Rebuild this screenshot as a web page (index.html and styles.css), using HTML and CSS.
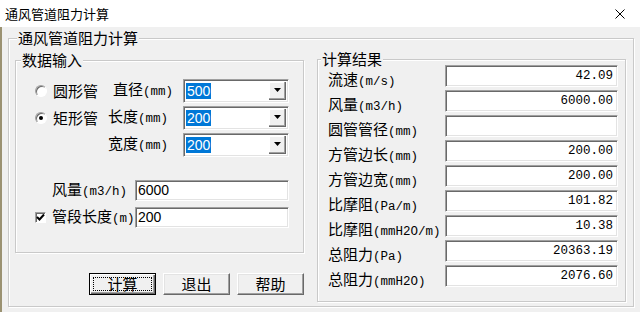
FILE: index.html
```html
<!DOCTYPE html>
<html lang="zh-CN">
<head>
    <meta charset="UTF-8">
    <title>通风管道阻力计算</title>
    <link rel="stylesheet" href="styles.css">
</head>
<body>
    <div class="titlebar">
        <span>通风管道阻力计算</span>
        <svg class="close" width="10" height="10" viewBox="0 0 10 10">
            <path d="M0.5 0.5 L9.5 9.5 M9.5 0.5 L0.5 9.5" stroke="#000" stroke-width="1" fill="none"/>
        </svg>
    </div>

    <div class="client">
        <div class="group outer">
            <div class="group-title">通风管道阻力计算</div>
            <div class="columns">
                <!-- Input side -->
                <div class="left-col">
                    <div class="group input-group">
                        <div class="group-title">数据输入</div>

                        <div class="row">
                            <span class="radio"></span>
                            <span class="name">圆形管</span>
                            <span class="unit-label first">直径<span class="u">(mm)</span></span>
                            <div class="combo">
                                <span class="sel">500</span>
                                <span class="drop"><svg width="7" height="4" viewBox="0 0 7 4"><path d="M0 0 H7 L3.5 4 Z" fill="#000"/></svg></span>
                            </div>
                        </div>

                        <div class="row">
                            <span class="radio checked"></span>
                            <span class="name">矩形管</span>
                            <span class="unit-label">长度<span class="u">(mm)</span></span>
                            <div class="combo">
                                <span class="sel">200</span>
                                <span class="drop"><svg width="7" height="4" viewBox="0 0 7 4"><path d="M0 0 H7 L3.5 4 Z" fill="#000"/></svg></span>
                            </div>
                        </div>

                        <div class="row">
                            <span class="spacer"></span>
                            <span class="unit-label">宽度<span class="u">(mm)</span></span>
                            <div class="combo">
                                <span class="sel">200</span>
                                <span class="drop"><svg width="7" height="4" viewBox="0 0 7 4"><path d="M0 0 H7 L3.5 4 Z" fill="#000"/></svg></span>
                            </div>
                        </div>

                        <div class="row field-row">
                            <span class="check-space"></span>
                            <span class="field-label">风量<span class="u">(m3/h)</span></span>
                            <div class="field">6000</div>
                        </div>

                        <div class="row">
                            <span class="checkbox"><svg width="9" height="9" viewBox="0 0 9 9"><path d="M1 4 L3.5 6.5 L8 1.5" stroke="#000" stroke-width="2" fill="none"/></svg></span>
                            <span class="field-label">管段长度<span class="u">(m)</span></span>
                            <div class="field">200</div>
                        </div>
                    </div>

                    <div class="buttons">
                        <div class="btn default"><span class="focus">计算</span></div>
                        <div class="btn">退出</div>
                        <div class="btn">帮助</div>
                    </div>
                </div>

                <!-- Results side -->
                <div class="group result-group">
                    <div class="group-title">计算结果</div>
                    <div class="result-row"><span class="label">流速<span class="u">(m/s)</span></span><div class="out">42.09</div></div>
                    <div class="result-row"><span class="label">风量<span class="u">(m3/h)</span></span><div class="out">6000.00</div></div>
                    <div class="result-row"><span class="label">圆管管径<span class="u">(mm)</span></span><div class="out"></div></div>
                    <div class="result-row"><span class="label">方管边长<span class="u">(mm)</span></span><div class="out">200.00</div></div>
                    <div class="result-row"><span class="label">方管边宽<span class="u">(mm)</span></span><div class="out">200.00</div></div>
                    <div class="result-row"><span class="label">比摩阻<span class="u">(Pa/m)</span></span><div class="out">101.82</div></div>
                    <div class="result-row"><span class="label">比摩阻<span class="u">(mmH2O/m)</span></span><div class="out">10.38</div></div>
                    <div class="result-row"><span class="label">总阻力<span class="u">(Pa)</span></span><div class="out">20363.19</div></div>
                    <div class="result-row"><span class="label">总阻力<span class="u">(mmH2O)</span></span><div class="out">2076.60</div></div>
                </div>
            </div>
        </div>
    </div>
</body>
</html>
```

FILE: styles.css
```css
/* Base */
* {
    box-sizing: border-box;
}

body {
    margin: 0;
    width: 640px;
    height: 312px;
    overflow: hidden;
    background: #f0f0f0;
    font-family: "Noto Sans CJK SC", sans-serif;
    font-size: 15px;
    color: #000;
}

/* Title bar */
.titlebar {
    height: 27px;
    background: #fff;
    display: flex;
    align-items: center;
    justify-content: space-between;
    padding: 0 15px 0 5px;
    font-size: 13px;
}

.client {
    height: 285px;
    border-left: 2px solid #9b9272;
    padding: 11px 0 0 6px;
}

/* Group boxes */
.group {
    border: 1px solid #c9c9c9;
    box-shadow: inset 1px 1px 0 #fff, 1px 1px 0 #fff;
}

.group-title {
    width: fit-content;
    margin-top: -9px;
    padding: 0 1px;
    line-height: 16px;
    background: #f0f0f0;
    white-space: nowrap;
}

.outer {
    width: 626px;
    height: 269px;
}

.outer > .group-title {
    margin-left: 8px;
}

.columns {
    display: flex;
    align-items: flex-start;
    gap: 13px;
    margin: 14px 0 0 6px;
}

.left-col {
    width: 289px;
}

/* Input group */
.input-group {
    height: 193px;
    padding-right: 14px;
}

.input-group > .group-title {
    margin-left: 5px;
    margin-bottom: 9px;
}

.row {
    display: flex;
    align-items: center;
    height: 27px;
    padding-left: 19px;
    line-height: 16px;
    white-space: nowrap;
}

.field-row {
    margin-top: 19px;
}

.u {
    font-family: "Liberation Mono", monospace;
    font-size: 12.5px;
}

.radio {
    position: relative;
    flex-shrink: 0;
    width: 12px;
    height: 12px;
    border-radius: 50%;
    background: #fff;
    border: 1px solid;
    border-color: #a0a0a0 #fff #fff #a0a0a0;
    box-shadow: inset 1px 1px 0 #696969;
}

.radio.checked::after {
    content: "";
    position: absolute;
    left: 3px;
    top: 3px;
    width: 4px;
    height: 4px;
    border-radius: 50%;
    background: #000;
}

.name {
    margin-left: 6px;
    width: 55px;
}

.spacer {
    width: 73px;
    flex-shrink: 0;
}

.unit-label.first {
    margin-left: 5px;
}

.combo {
    display: flex;
    align-items: center;
    margin-left: auto;
    width: 106px;
    height: 24px;
    padding: 2px;
    background: #fff;
    border: 1px solid;
    border-color: #a0a0a0 #fff #fff #a0a0a0;
    box-shadow: inset 1px 1px 0 #696969, inset -1px -1px 0 #e3e3e3;
}

.sel {
    padding: 0 1px;
    background: #0078d7;
    color: #fff;
    font-family: "Liberation Sans", Arial, sans-serif;
    font-size: 14px;
    line-height: 16px;
}

.drop {
    display: flex;
    align-items: center;
    justify-content: center;
    margin-left: auto;
    width: 17px;
    height: 100%;
    background: #f0f0f0;
    border-right: 1px solid #696969;
    border-bottom: 1px solid #696969;
    box-shadow: inset -1px -1px 0 #a0a0a0, inset 1px 1px 0 #fff;
}

.check-space {
    width: 11px;
    flex-shrink: 0;
}

.checkbox {
    display: flex;
    align-items: center;
    justify-content: center;
    flex-shrink: 0;
    width: 11px;
    height: 11px;
    background: #fff;
    border: 1px solid;
    border-color: #a0a0a0 #fff #fff #a0a0a0;
    box-shadow: inset 1px 1px 0 #696969;
}

.field-label {
    margin-left: 6px;
}

.field {
    flex-shrink: 0;
    margin-left: auto;
    width: 154px;
    height: 21px;
    padding: 0 2px;
    background: #fff;
    border: 1px solid;
    border-color: #a0a0a0 #fff #fff #a0a0a0;
    box-shadow: inset 1px 1px 0 #696969, inset -1px -1px 0 #e3e3e3;
    font-family: "Liberation Sans", Arial, sans-serif;
    font-size: 14px;
    line-height: 19px;
}

/* Buttons */
.buttons {
    display: flex;
    justify-content: flex-end;
    gap: 7px;
    margin-top: 20px;
}

.btn {
    display: flex;
    align-items: center;
    justify-content: center;
    width: 67px;
    height: 22px;
    background: #f0f0f0;
    border: 1px solid;
    border-color: #fff #696969 #696969 #fff;
    box-shadow: inset -1px -1px 0 #a0a0a0, inset 1px 1px 0 #e3e3e3;
    line-height: 16px;
}

.btn.default {
    border-color: #000;
    box-shadow: inset 1px 1px 0 #fff, inset -1px -1px 0 #696969, inset -2px -2px 0 #a0a0a0;
    padding: 3px;
}

.focus {
    flex: 1;
    align-self: stretch;
    display: flex;
    align-items: center;
    justify-content: center;
    border: 1px dotted #000;
}

/* Results group */
.result-group {
    width: 309px;
    height: 243px;
    margin-top: -1px;
    padding-right: 7px;
}

.result-group > .group-title {
    margin-left: 3px;
    margin-bottom: -2px;
}

.result-row {
    display: flex;
    height: 25px;
    padding-left: 10px;
}

.label {
    padding-top: 6px;
    line-height: 16px;
    white-space: nowrap;
}

.out {
    flex-shrink: 0;
    margin-left: auto;
    width: 173px;
    height: 22px;
    padding-right: 4px;
    background: #fff;
    border: 1px solid;
    border-color: #a0a0a0 #fff #fff #a0a0a0;
    box-shadow: inset 1px 1px 0 #696969, inset -1px -1px 0 #e3e3e3;
    text-align: right;
    font-family: "Liberation Mono", monospace;
    font-size: 12.5px;
    line-height: 20px;
}
```
